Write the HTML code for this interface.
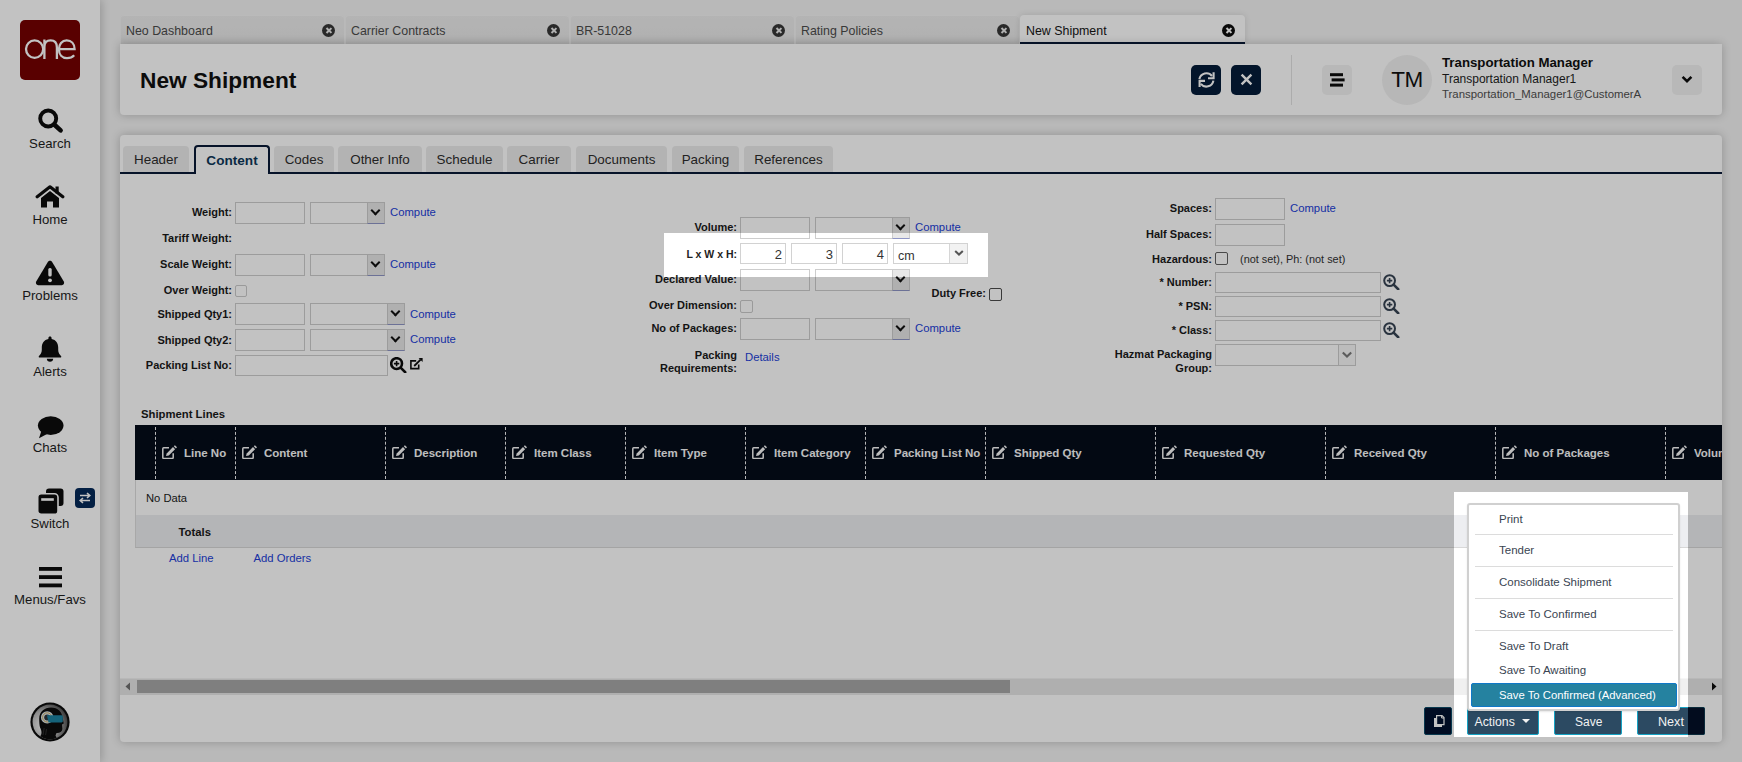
<!DOCTYPE html>
<html><head><meta charset="utf-8">
<style>
*{box-sizing:border-box;margin:0;padding:0}
html,body{width:1742px;height:762px;overflow:hidden}
body{background:#f3f3f3;font-family:"Liberation Sans",sans-serif;color:#161616;position:relative}
.a{position:absolute}
#side{left:0;top:0;width:100px;height:762px;background:#ffffff;box-shadow:2px 0 8px rgba(0,0,0,.18)}
.logo{left:20px;top:20px;width:60px;height:60px;background:#750000;border-radius:5px}
.nl{font-size:13.2px;color:#1d1d1d;width:100px;text-align:center;left:0}
.dt{top:15px;height:29px;width:224px;background:linear-gradient(#ededed,#e9e9e9 75%,#e1e1e1);border-radius:4px 4px 0 0;box-shadow:inset 0 1px 0 #f5f5f5,inset 1px 0 0 #f2f2f2}
.dt span{position:absolute;left:6px;top:9px;font-size:12.4px;color:#4c4c4c;white-space:nowrap}
.dt i{position:absolute;left:202px;top:8.6px;width:13px;height:13px;border-radius:50%;background:#373737}
.dt i:before,.dt i:after{content:"";position:absolute;left:6px;top:3px;width:1.8px;height:7px;background:#e9e9e9;transform:rotate(45deg)}
.dt i:after{transform:rotate(-45deg)}
.dt i.ai{background:#0d0d0d}.dt i.ai:before,.dt i.ai:after{background:#ffffff}
.panel{background:#ffffff;border-radius:4px;box-shadow:0 0 10px rgba(0,0,0,.22)}
.ct{top:146px;height:26px;background:#ececec;border-radius:4px 4px 0 0;font-size:13.4px;color:#2d2d2d;text-align:center;line-height:27px}
.lbl{font-size:11px;font-weight:700;color:#1a1a1a;text-align:right;white-space:nowrap}
.inp{height:22px;border:1px solid #cdcdcd;background:#ffffff}
.sel{height:22px;border:1px solid #cdcdcd;background:#ffffff}
.sel b{position:absolute;right:-1px;top:0;width:18px;height:21px;background:#e8e8e8;border-left:1px solid #cdcdcd;border-right:1px solid #cdcdcd;border-bottom:1px solid #8e95c5}
.sel b:after{content:"";position:absolute;left:4.3px;top:4.4px;width:4.9px;height:4.9px;border-right:2.1px solid #121212;border-bottom:2.1px solid #121212;transform:rotate(45deg)}
.sel.h b:after{display:none}
.lnk{font-size:11.3px;color:#2437c8;white-space:nowrap}
.cb{width:12px;height:12px;border:1px solid #cbcbcb;border-radius:2px;background:#ffffff}
</style></head><body>
<!-- sidebar -->
<div id="side" class="a">
  <div class="a logo"></div>
  <svg class="a" style="left:20px;top:20px" width="60" height="60" viewBox="0 0 60 60"><g fill="none" stroke="#ffffff" stroke-width="2.3"><ellipse cx="14.6" cy="29.1" rx="8.6" ry="8.7"/><path d="M24.4 39 V19.6 M24.4 27 C24.4 22 27.2 20.4 30.6 20.4 C34.6 20.4 36.9 22.6 36.9 27.5 V39"/><path d="M38.9 29.2 H54.6 C54.6 23.6 51.2 20.4 46.7 20.4 C42 20.4 38.9 24.3 38.9 29.3 C38.9 34.6 42.2 38.1 47 38.1 C50.4 38.1 52.6 36.9 54.2 35.2"/></g></svg>
  <svg class="a" style="left:38px;top:108px" width="26" height="26" viewBox="0 0 26 26"><circle cx="10.2" cy="10.5" r="8" fill="none" stroke="#0d0d0d" stroke-width="3.9"/><path d="M16.2 16.5 L22.6 22.4" stroke="#0d0d0d" stroke-width="4.6" stroke-linecap="round"/></svg>
  <div class="a nl" style="top:136px">Search</div>
  <svg class="a" style="left:35px;top:185px" width="30" height="23" viewBox="0 0 30 23"><path d="M2.2 11.8 L15 1.8 L27.8 11.8" fill="none" stroke="#0d0d0d" stroke-width="3.2" stroke-linecap="round" stroke-linejoin="round"/><rect x="20.5" y="1.5" width="3.2" height="7" fill="#0d0d0d"/><path d="M6 13 L15 6 L24 13 V22.6 H18 V16.5 H12 V22.6 H6 Z" fill="#0d0d0d"/></svg>
  <div class="a nl" style="top:212px">Home</div>
  <svg class="a" style="left:35px;top:260px" width="30" height="26" viewBox="0 0 30 26"><path d="M15 0.8 C16.1 0.8 16.8 1.4 17.3 2.2 L28.8 21.6 C29.7 23.2 28.6 25.2 26.8 25.2 H3.2 C1.4 25.2 0.3 23.2 1.2 21.6 L12.7 2.2 C13.2 1.4 13.9 0.8 15 0.8 Z" fill="#0d0d0d"/><rect x="13.3" y="8" width="3.4" height="8.5" rx="1.5" fill="#ffffff"/><circle cx="15" cy="20.3" r="1.9" fill="#ffffff"/></svg>
  <div class="a nl" style="top:288px">Problems</div>
  <svg class="a" style="left:38px;top:336px" width="24" height="26" viewBox="0 0 24 26"><path d="M12 0.5 C13 0.5 13.6 1.2 13.6 2.2 V3 C18 3.8 20.2 7.5 20.2 11.5 V14 C20.2 16.5 21.5 18.5 23 20 C23.6 20.6 23.3 21.6 22.4 21.6 H1.6 C0.7 21.6 0.4 20.6 1 20 C2.5 18.5 3.8 16.5 3.8 14 V11.5 C3.8 7.5 6 3.8 10.4 3 V2.2 C10.4 1.2 11 0.5 12 0.5 Z" fill="#0d0d0d"/><path d="M8.8 22.8 H15.2 C15.2 24.6 13.8 25.8 12 25.8 C10.2 25.8 8.8 24.6 8.8 22.8 Z" fill="#0d0d0d"/></svg>
  <div class="a nl" style="top:364px">Alerts</div>
  <svg class="a" style="left:37px;top:416px" width="27" height="23" viewBox="0 0 27 23"><ellipse cx="13.7" cy="9.6" rx="12.8" ry="9.3" fill="#0d0d0d"/><path d="M4.5 14.5 L2 22.3 L11 17.5 Z" fill="#0d0d0d"/></svg>
  <div class="a nl" style="top:440px">Chats</div>
  <svg class="a" style="left:38px;top:488px" width="26" height="26" viewBox="0 0 26 26"><rect x="8" y="0.5" width="17.5" height="17.5" rx="3" fill="#0d0d0d"/><rect x="-0.3" y="5.8" width="20.3" height="20.6" rx="3.5" fill="#0d0d0d" stroke="#ffffff" stroke-width="1.6"/><rect x="3.2" y="10.2" width="12.6" height="2.6" fill="#ffffff"/></svg>
  <div class="a" style="left:75px;top:488px;width:20px;height:20px;border-radius:4px;background:#042959"></div>
  <svg class="a" style="left:75px;top:488px" width="20" height="20" viewBox="0 0 20 20"><path d="M5 7.5 H14.5 M12 5 L14.8 7.5 L12 10 M15 12.5 H5.5 M8 10 L5.2 12.5 L8 15" stroke="#ffffff" stroke-width="1.6" fill="none"/></svg>
  <div class="a nl" style="top:516px">Switch</div>
  <svg class="a" style="left:39px;top:567px" width="23" height="21" viewBox="0 0 23 21"><rect x="0" y="0" width="23" height="3.8" fill="#0d0d0d"/><rect x="0" y="8.2" width="23" height="3.8" fill="#0d0d0d"/><rect x="0" y="16.5" width="23" height="3.8" fill="#0d0d0d"/></svg>
  <div class="a nl" style="top:592px">Menus/Favs</div>
  <svg class="a" style="left:30px;top:702px" width="40" height="40" viewBox="0 0 40 40"><defs><radialGradient id="ag" cx="0.32" cy="0.6" r="0.75"><stop offset="0" stop-color="#ffffff"/><stop offset="0.55" stop-color="#b8b8b8"/><stop offset="1" stop-color="#3d3d3d"/></radialGradient><clipPath id="ac"><circle cx="20" cy="20" r="17.4"/></clipPath></defs><circle cx="20" cy="20" r="19.6" fill="#0d0d0d"/><circle cx="20" cy="20" r="17.4" fill="url(#ag)"/><g clip-path="url(#ac)"><path d="M9.2 17 C9.2 9.5 14.5 5.6 21 5.6 C28 5.6 32.2 10 32.6 16 L33.8 21.5 L32 22.6 L32.4 27 C32.2 30 29.5 31.2 26.5 31 L25.5 33.5 L29 41 H7 L11.2 32.5 C12 29.5 11 27.5 10 25.5 C9.4 23 9.2 20 9.2 17 Z" fill="#0d0d0d"/><circle cx="17.2" cy="15.4" r="6.2" fill="#deeaef"/><circle cx="17.2" cy="15.4" r="4.6" fill="none" stroke="#cda14f" stroke-width="0.9"/><circle cx="17.2" cy="15.4" r="3" fill="#32373a"/><path d="M17 13.2 H31.6 C32.6 13.2 32.8 14 32.8 15 V19 C32.8 20 32.4 20.4 31.6 20.4 H18.5 Z" fill="#1c82a1"/><path d="M14.2 26 L13 33 M16.5 27 L15.6 33" stroke="#373737" stroke-width="0.8"/></g></svg>
</div>
<!-- doc tabs -->
<div class="a dt" style="left:120px"><span>Neo Dashboard</span><i></i></div>
<div class="a dt" style="left:345px"><span>Carrier Contracts</span><i></i></div>
<div class="a dt" style="left:570px"><span>BR-51028</span><i></i></div>
<div class="a dt" style="left:795px"><span>Rating Policies</span><i></i></div>
<div class="a dt" style="left:1020px;width:225px;background:#ffffff;border-bottom:2px solid #081a37;box-shadow:0 0 6px rgba(0,0,0,.12)"><span style="color:#161616">New Shipment</span><i class="ai"></i></div>
<!-- header panel -->
<div class="a panel" style="left:120px;top:44px;width:1602px;height:71px;border-radius:0 0 4px 4px"></div>
<div class="a" style="left:140px;top:67px;font-size:22.7px;font-weight:700;color:#101010">New Shipment</div>
<div class="a" style="left:1191px;top:65px;width:30px;height:30px;border-radius:5px;background:#041c39"></div>
<svg class="a" style="left:1191px;top:65px" width="30" height="30" viewBox="0 0 30 30"><g fill="none" stroke="#ffffff" stroke-width="2.1"><path d="M8.4 14.2 A7.1 7.1 0 0 1 21 11"/><path d="M22.6 7.2 V13.3 H17"/><path d="M22.4 15.6 A7.1 7.1 0 0 1 9.8 18.8"/><path d="M8.6 22 V15.9 H14"/></g></svg>
<div class="a" style="left:1231px;top:65px;width:30px;height:30px;border-radius:5px;background:#041c39"></div>
<svg class="a" style="left:1231px;top:65px" width="30" height="30" viewBox="0 0 30 30"><path d="M10.6 9.6 L20.4 19.4 M20.4 9.6 L10.6 19.4" stroke="#ffffff" stroke-width="2.4" stroke-linecap="butt"/></svg>
<div class="a" style="left:1291px;top:55px;width:1px;height:50px;background:#e2e2e2"></div>
<div class="a" style="left:1322px;top:65px;width:30px;height:30px;border-radius:5px;background:#f2f2f2"></div>
<svg class="a" style="left:1322px;top:65px" width="30" height="30"><rect x="8" y="8.2" width="13" height="3" fill="#0d0d0d"/><rect x="9.6" y="13.4" width="13" height="3" fill="#0d0d0d"/><rect x="8" y="18.6" width="13" height="3" fill="#0d0d0d"/></svg>
<div class="a" style="left:1382px;top:55px;width:50px;height:50px;border-radius:50%;background:#f1f1f1"></div>
<div class="a" style="left:1382px;top:67px;width:50px;text-align:center;font-size:22.5px;color:#101010;letter-spacing:-0.5px">TM</div>
<div class="a" style="left:1442px;top:54.5px;font-size:13.25px;font-weight:700;color:#101010;white-space:nowrap">Transportation Manager</div>
<div class="a" style="left:1442px;top:71.5px;font-size:12px;color:#1d1d1d;white-space:nowrap">Transportation Manager1</div>
<div class="a" style="left:1442px;top:88px;font-size:11.4px;color:#4f4f4f;white-space:nowrap">Transportation_Manager1@CustomerA</div>
<div class="a" style="left:1672px;top:65px;width:30px;height:30px;border-radius:5px;background:#f2f2f2"></div>
<svg class="a" style="left:1672px;top:65px" width="30" height="30"><path d="M10.6 11.9 L15 16.2 L19.4 11.9" fill="none" stroke="#0d0d0d" stroke-width="2.6"/></svg>
<!-- content panel -->
<div class="a panel" style="left:120px;top:135px;width:1602px;height:607px"></div>
<div class="a ct" style="left:123px;width:66px">Header</div>
<div class="a ct" style="left:194px;width:76px;top:145px;height:29px;background:#ffffff;border:2px solid #081a37;border-bottom:none;font-weight:700;color:#0e3759;line-height:27px;font-size:13.6px;z-index:2">Content</div>
<div class="a ct" style="left:274px;width:60px">Codes</div>
<div class="a ct" style="left:338px;width:84px">Other Info</div>
<div class="a ct" style="left:426px;width:77px">Schedule</div>
<div class="a ct" style="left:507px;width:64px">Carrier</div>
<div class="a ct" style="left:576px;width:91px">Documents</div>
<div class="a ct" style="left:672px;width:67px">Packing</div>
<div class="a ct" style="left:744px;width:89px">References</div>
<div class="a" style="left:120px;top:172px;width:1602px;height:2px;background:#081a37"></div>

<div class="a" style="right:1510.0px;top:206.0px;font-size:11px;font-weight:700;color:#1a1a1a;white-space:nowrap;line-height:normal;">Weight:</div>
<div class="a inp" style="left:235px;top:202px;width:70px;height:22px"></div>
<div class="a sel" style="left:310px;top:202px;width:75px;height:22px"><b></b></div>
<div class="a" style="left:390.0px;top:205.8px;font-size:11.3px;font-weight:400;color:#223ed8;white-space:nowrap;line-height:normal;">Compute</div>
<div class="a" style="right:1510.0px;top:232.0px;font-size:11px;font-weight:700;color:#1a1a1a;white-space:nowrap;line-height:normal;">Tariff Weight:</div>
<div class="a" style="right:1510.0px;top:258.0px;font-size:11px;font-weight:700;color:#1a1a1a;white-space:nowrap;line-height:normal;">Scale Weight:</div>
<div class="a inp" style="left:235px;top:254px;width:70px;height:22px"></div>
<div class="a sel" style="left:310px;top:254px;width:75px;height:22px"><b></b></div>
<div class="a" style="left:390.0px;top:257.8px;font-size:11.3px;font-weight:400;color:#223ed8;white-space:nowrap;line-height:normal;">Compute</div>
<div class="a" style="right:1510.0px;top:284.0px;font-size:11px;font-weight:700;color:#1a1a1a;white-space:nowrap;line-height:normal;">Over Weight:</div>
<div class="a cb" style="left:235px;top:285px;width:12px;height:12px"></div>
<div class="a" style="right:1510.0px;top:308.0px;font-size:11px;font-weight:700;color:#1a1a1a;white-space:nowrap;line-height:normal;">Shipped Qty1:</div>
<div class="a inp" style="left:235px;top:303px;width:70px;height:22px"></div>
<div class="a sel" style="left:310px;top:303px;width:95px;height:22px"><b></b></div>
<div class="a" style="left:410.0px;top:307.8px;font-size:11.3px;font-weight:400;color:#223ed8;white-space:nowrap;line-height:normal;">Compute</div>
<div class="a" style="right:1510.0px;top:333.5px;font-size:11px;font-weight:700;color:#1a1a1a;white-space:nowrap;line-height:normal;">Shipped Qty2:</div>
<div class="a inp" style="left:235px;top:329px;width:70px;height:22px"></div>
<div class="a sel" style="left:310px;top:329px;width:95px;height:22px"><b></b></div>
<div class="a" style="left:410.0px;top:333.3px;font-size:11.3px;font-weight:400;color:#223ed8;white-space:nowrap;line-height:normal;">Compute</div>
<div class="a" style="right:1510.0px;top:359.0px;font-size:11px;font-weight:700;color:#1a1a1a;white-space:nowrap;line-height:normal;">Packing List No:</div>
<div class="a inp" style="left:235px;top:355px;width:153px;height:21px"></div>
<svg class="a" style="left:390px;top:357px" width="17" height="16" viewBox="0 0 17 16"><circle cx="6.6" cy="6.6" r="5.4" fill="none" stroke="#0d0d0d" stroke-width="2.6"/><path d="M10.6 10.6 L15.2 15.2" stroke="#0d0d0d" stroke-width="2.6" stroke-linecap="round"/><path d="M6.6 3.9 V9.3 M3.9 6.6 H9.3" stroke="#0d0d0d" stroke-width="1.6"/></svg>
<svg class="a" style="left:409px;top:357px" width="15" height="14" viewBox="0 0 15 14"><path d="M7.2 3.9 H1.9 V11.6 H9.7 V7.6" fill="none" stroke="#0d0d0d" stroke-width="1.6"/><path d="M5.2 9 L11.6 2.6" stroke="#0d0d0d" stroke-width="1.8"/><path d="M9.6 1 H13.6 V5 Z" fill="#0d0d0d"/></svg>
<div class="a" style="right:1005.0px;top:221.0px;font-size:11px;font-weight:700;color:#1a1a1a;white-space:nowrap;line-height:normal;">Volume:</div>
<div class="a inp" style="left:740px;top:217px;width:70px;height:22px"></div>
<div class="a sel" style="left:815px;top:217px;width:95px;height:22px"><b></b></div>
<div class="a" style="left:915.0px;top:220.8px;font-size:11.3px;font-weight:400;color:#223ed8;white-space:nowrap;line-height:normal;">Compute</div>
<div class="a" style="right:1005.0px;top:272.5px;font-size:11px;font-weight:700;color:#1a1a1a;white-space:nowrap;line-height:normal;">Declared Value:</div>
<div class="a inp" style="left:740px;top:269px;width:70px;height:22px"></div>
<div class="a sel" style="left:815px;top:269px;width:95px;height:22px"><b></b></div>
<div class="a" style="right:756.0px;top:287.0px;font-size:11px;font-weight:700;color:#1a1a1a;white-space:nowrap;line-height:normal;">Duty Free:</div>
<div class="a cb" style="left:989px;top:288px;width:13px;height:13px;border-color:#4c4c4c"></div>
<div class="a" style="right:1005.0px;top:299.0px;font-size:11px;font-weight:700;color:#1a1a1a;white-space:nowrap;line-height:normal;">Over Dimension:</div>
<div class="a cb" style="left:740px;top:300px;width:13px;height:13px"></div>
<div class="a" style="right:1005.0px;top:321.5px;font-size:11px;font-weight:700;color:#1a1a1a;white-space:nowrap;line-height:normal;">No of Packages:</div>
<div class="a inp" style="left:740px;top:318px;width:70px;height:22px"></div>
<div class="a sel" style="left:815px;top:318px;width:95px;height:22px"><b></b></div>
<div class="a" style="left:915.0px;top:322.3px;font-size:11.3px;font-weight:400;color:#223ed8;white-space:nowrap;line-height:normal;">Compute</div>
<div class="a" style="right:1005.0px;top:348.5px;font-size:11px;font-weight:700;color:#1a1a1a;white-space:nowrap;line-height:normal;">Packing</div>
<div class="a" style="right:1005.0px;top:362.0px;font-size:11px;font-weight:700;color:#1a1a1a;white-space:nowrap;line-height:normal;">Requirements:</div>
<div class="a" style="left:745.0px;top:350.8px;font-size:11.3px;font-weight:400;color:#223ed8;white-space:nowrap;line-height:normal;">Details</div>
<div class="a" style="right:530.0px;top:202.0px;font-size:11px;font-weight:700;color:#1a1a1a;white-space:nowrap;line-height:normal;">Spaces:</div>
<div class="a inp" style="left:1215px;top:198px;width:70px;height:22px"></div>
<div class="a" style="left:1290.0px;top:201.8px;font-size:11.3px;font-weight:400;color:#223ed8;white-space:nowrap;line-height:normal;">Compute</div>
<div class="a" style="right:530.0px;top:228.0px;font-size:11px;font-weight:700;color:#1a1a1a;white-space:nowrap;line-height:normal;">Half Spaces:</div>
<div class="a inp" style="left:1215px;top:224px;width:70px;height:22px"></div>
<div class="a" style="right:530.0px;top:253.0px;font-size:11px;font-weight:700;color:#1a1a1a;white-space:nowrap;line-height:normal;">Hazardous:</div>
<div class="a cb" style="left:1215px;top:252px;width:13px;height:13px;border-color:#616161"></div>
<div class="a" style="left:1240.0px;top:253.1px;font-size:10.9px;font-weight:400;color:#323232;white-space:nowrap;line-height:normal;">(not set), Ph: (not set)</div>
<div class="a" style="right:530.0px;top:276.0px;font-size:11px;font-weight:700;color:#1a1a1a;white-space:nowrap;line-height:normal;">* Number:</div>
<div class="a inp" style="left:1215px;top:272px;width:166px;height:21px"></div>
<svg class="a" style="left:1383px;top:274px" width="17" height="16" viewBox="0 0 17 16"><circle cx="6.6" cy="6.6" r="5.4" fill="none" stroke="#374454" stroke-width="2"/><path d="M10.6 10.6 L15.2 15.2" stroke="#374454" stroke-width="2.6" stroke-linecap="round"/><path d="M6.6 3.9 V9.3 M3.9 6.6 H9.3" stroke="#374454" stroke-width="1.6"/></svg>
<div class="a" style="right:530.0px;top:300.0px;font-size:11px;font-weight:700;color:#1a1a1a;white-space:nowrap;line-height:normal;">* PSN:</div>
<div class="a inp" style="left:1215px;top:296px;width:166px;height:21px"></div>
<svg class="a" style="left:1383px;top:298px" width="17" height="16" viewBox="0 0 17 16"><circle cx="6.6" cy="6.6" r="5.4" fill="none" stroke="#374454" stroke-width="2"/><path d="M10.6 10.6 L15.2 15.2" stroke="#374454" stroke-width="2.6" stroke-linecap="round"/><path d="M6.6 3.9 V9.3 M3.9 6.6 H9.3" stroke="#374454" stroke-width="1.6"/></svg>
<div class="a" style="right:530.0px;top:324.0px;font-size:11px;font-weight:700;color:#1a1a1a;white-space:nowrap;line-height:normal;">* Class:</div>
<div class="a inp" style="left:1215px;top:320px;width:166px;height:21px"></div>
<svg class="a" style="left:1383px;top:322px" width="17" height="16" viewBox="0 0 17 16"><circle cx="6.6" cy="6.6" r="5.4" fill="none" stroke="#374454" stroke-width="2"/><path d="M10.6 10.6 L15.2 15.2" stroke="#374454" stroke-width="2.6" stroke-linecap="round"/><path d="M6.6 3.9 V9.3 M3.9 6.6 H9.3" stroke="#374454" stroke-width="1.6"/></svg>
<div class="a" style="right:530.0px;top:348.0px;font-size:11px;font-weight:700;color:#1a1a1a;white-space:nowrap;line-height:normal;">Hazmat Packaging</div>
<div class="a" style="right:530.0px;top:362.0px;font-size:11px;font-weight:700;color:#1a1a1a;white-space:nowrap;line-height:normal;">Group:</div>
<div class="a sel h" style="left:1215px;top:344px;width:141px;height:22px"><b style="background:#f7f7f7;border-bottom-color:#cdcdcd"></b></div>
<svg class="a" style="left:1338px;top:344px" width="18" height="22"><path d="M4.8 8.6 L9 12.6 L13.2 8.6" fill="none" stroke="#797979" stroke-width="2.1"/></svg>
<div class="a" style="left:141.0px;top:407.8px;font-size:11.3px;font-weight:700;color:#1a1a1a;white-space:nowrap;line-height:normal;">Shipment Lines</div>
<div class="a" style="left:135px;top:425px;width:1587px;height:55px;background:#040c1a"></div>
<div class="a" style="left:155px;top:427px;width:0px;height:52px;border-left:1px dashed #f2f2f2"></div>
<svg class="a" style="left:162px;top:445px" width="15" height="14" viewBox="0 0 15 14"><path d="M7 2.8 H1.7 C1.1 2.8 0.8 3.1 0.8 3.7 V12.5 C0.8 13.1 1.1 13.4 1.7 13.4 H10.3 C10.9 13.4 11.2 13.1 11.2 12.5 V8.2" fill="none" stroke="#f9f9f9" stroke-width="1.5"/><path d="M4 11.1 L4.7 8.4 L11 2.1 L13.1 4.2 L6.8 10.5 Z" fill="#f9f9f9"/><path d="M11.8 1.3 L12.9 0.2 L15 2.3 L13.9 3.4 Z" fill="#f9f9f9"/></svg>
<div class="a" style="left:184.0px;top:446.6px;font-size:11.5px;font-weight:700;color:#f9f9f9;white-space:nowrap;line-height:normal;">Line No</div>
<div class="a" style="left:235px;top:427px;width:0px;height:52px;border-left:1px dashed #f2f2f2"></div>
<svg class="a" style="left:242px;top:445px" width="15" height="14" viewBox="0 0 15 14"><path d="M7 2.8 H1.7 C1.1 2.8 0.8 3.1 0.8 3.7 V12.5 C0.8 13.1 1.1 13.4 1.7 13.4 H10.3 C10.9 13.4 11.2 13.1 11.2 12.5 V8.2" fill="none" stroke="#f9f9f9" stroke-width="1.5"/><path d="M4 11.1 L4.7 8.4 L11 2.1 L13.1 4.2 L6.8 10.5 Z" fill="#f9f9f9"/><path d="M11.8 1.3 L12.9 0.2 L15 2.3 L13.9 3.4 Z" fill="#f9f9f9"/></svg>
<div class="a" style="left:264.0px;top:446.6px;font-size:11.5px;font-weight:700;color:#f9f9f9;white-space:nowrap;line-height:normal;">Content</div>
<div class="a" style="left:385px;top:427px;width:0px;height:52px;border-left:1px dashed #f2f2f2"></div>
<svg class="a" style="left:392px;top:445px" width="15" height="14" viewBox="0 0 15 14"><path d="M7 2.8 H1.7 C1.1 2.8 0.8 3.1 0.8 3.7 V12.5 C0.8 13.1 1.1 13.4 1.7 13.4 H10.3 C10.9 13.4 11.2 13.1 11.2 12.5 V8.2" fill="none" stroke="#f9f9f9" stroke-width="1.5"/><path d="M4 11.1 L4.7 8.4 L11 2.1 L13.1 4.2 L6.8 10.5 Z" fill="#f9f9f9"/><path d="M11.8 1.3 L12.9 0.2 L15 2.3 L13.9 3.4 Z" fill="#f9f9f9"/></svg>
<div class="a" style="left:414.0px;top:446.6px;font-size:11.5px;font-weight:700;color:#f9f9f9;white-space:nowrap;line-height:normal;">Description</div>
<div class="a" style="left:505px;top:427px;width:0px;height:52px;border-left:1px dashed #f2f2f2"></div>
<svg class="a" style="left:512px;top:445px" width="15" height="14" viewBox="0 0 15 14"><path d="M7 2.8 H1.7 C1.1 2.8 0.8 3.1 0.8 3.7 V12.5 C0.8 13.1 1.1 13.4 1.7 13.4 H10.3 C10.9 13.4 11.2 13.1 11.2 12.5 V8.2" fill="none" stroke="#f9f9f9" stroke-width="1.5"/><path d="M4 11.1 L4.7 8.4 L11 2.1 L13.1 4.2 L6.8 10.5 Z" fill="#f9f9f9"/><path d="M11.8 1.3 L12.9 0.2 L15 2.3 L13.9 3.4 Z" fill="#f9f9f9"/></svg>
<div class="a" style="left:534.0px;top:446.6px;font-size:11.5px;font-weight:700;color:#f9f9f9;white-space:nowrap;line-height:normal;">Item Class</div>
<div class="a" style="left:625px;top:427px;width:0px;height:52px;border-left:1px dashed #f2f2f2"></div>
<svg class="a" style="left:632px;top:445px" width="15" height="14" viewBox="0 0 15 14"><path d="M7 2.8 H1.7 C1.1 2.8 0.8 3.1 0.8 3.7 V12.5 C0.8 13.1 1.1 13.4 1.7 13.4 H10.3 C10.9 13.4 11.2 13.1 11.2 12.5 V8.2" fill="none" stroke="#f9f9f9" stroke-width="1.5"/><path d="M4 11.1 L4.7 8.4 L11 2.1 L13.1 4.2 L6.8 10.5 Z" fill="#f9f9f9"/><path d="M11.8 1.3 L12.9 0.2 L15 2.3 L13.9 3.4 Z" fill="#f9f9f9"/></svg>
<div class="a" style="left:654.0px;top:446.6px;font-size:11.5px;font-weight:700;color:#f9f9f9;white-space:nowrap;line-height:normal;">Item Type</div>
<div class="a" style="left:745px;top:427px;width:0px;height:52px;border-left:1px dashed #f2f2f2"></div>
<svg class="a" style="left:752px;top:445px" width="15" height="14" viewBox="0 0 15 14"><path d="M7 2.8 H1.7 C1.1 2.8 0.8 3.1 0.8 3.7 V12.5 C0.8 13.1 1.1 13.4 1.7 13.4 H10.3 C10.9 13.4 11.2 13.1 11.2 12.5 V8.2" fill="none" stroke="#f9f9f9" stroke-width="1.5"/><path d="M4 11.1 L4.7 8.4 L11 2.1 L13.1 4.2 L6.8 10.5 Z" fill="#f9f9f9"/><path d="M11.8 1.3 L12.9 0.2 L15 2.3 L13.9 3.4 Z" fill="#f9f9f9"/></svg>
<div class="a" style="left:774.0px;top:446.6px;font-size:11.5px;font-weight:700;color:#f9f9f9;white-space:nowrap;line-height:normal;">Item Category</div>
<div class="a" style="left:865px;top:427px;width:0px;height:52px;border-left:1px dashed #f2f2f2"></div>
<svg class="a" style="left:872px;top:445px" width="15" height="14" viewBox="0 0 15 14"><path d="M7 2.8 H1.7 C1.1 2.8 0.8 3.1 0.8 3.7 V12.5 C0.8 13.1 1.1 13.4 1.7 13.4 H10.3 C10.9 13.4 11.2 13.1 11.2 12.5 V8.2" fill="none" stroke="#f9f9f9" stroke-width="1.5"/><path d="M4 11.1 L4.7 8.4 L11 2.1 L13.1 4.2 L6.8 10.5 Z" fill="#f9f9f9"/><path d="M11.8 1.3 L12.9 0.2 L15 2.3 L13.9 3.4 Z" fill="#f9f9f9"/></svg>
<div class="a" style="left:894.0px;top:446.6px;font-size:11.5px;font-weight:700;color:#f9f9f9;white-space:nowrap;line-height:normal;">Packing List No</div>
<div class="a" style="left:985px;top:427px;width:0px;height:52px;border-left:1px dashed #f2f2f2"></div>
<svg class="a" style="left:992px;top:445px" width="15" height="14" viewBox="0 0 15 14"><path d="M7 2.8 H1.7 C1.1 2.8 0.8 3.1 0.8 3.7 V12.5 C0.8 13.1 1.1 13.4 1.7 13.4 H10.3 C10.9 13.4 11.2 13.1 11.2 12.5 V8.2" fill="none" stroke="#f9f9f9" stroke-width="1.5"/><path d="M4 11.1 L4.7 8.4 L11 2.1 L13.1 4.2 L6.8 10.5 Z" fill="#f9f9f9"/><path d="M11.8 1.3 L12.9 0.2 L15 2.3 L13.9 3.4 Z" fill="#f9f9f9"/></svg>
<div class="a" style="left:1014.0px;top:446.6px;font-size:11.5px;font-weight:700;color:#f9f9f9;white-space:nowrap;line-height:normal;">Shipped Qty</div>
<div class="a" style="left:1155px;top:427px;width:0px;height:52px;border-left:1px dashed #f2f2f2"></div>
<svg class="a" style="left:1162px;top:445px" width="15" height="14" viewBox="0 0 15 14"><path d="M7 2.8 H1.7 C1.1 2.8 0.8 3.1 0.8 3.7 V12.5 C0.8 13.1 1.1 13.4 1.7 13.4 H10.3 C10.9 13.4 11.2 13.1 11.2 12.5 V8.2" fill="none" stroke="#f9f9f9" stroke-width="1.5"/><path d="M4 11.1 L4.7 8.4 L11 2.1 L13.1 4.2 L6.8 10.5 Z" fill="#f9f9f9"/><path d="M11.8 1.3 L12.9 0.2 L15 2.3 L13.9 3.4 Z" fill="#f9f9f9"/></svg>
<div class="a" style="left:1184.0px;top:446.6px;font-size:11.5px;font-weight:700;color:#f9f9f9;white-space:nowrap;line-height:normal;">Requested Qty</div>
<div class="a" style="left:1325px;top:427px;width:0px;height:52px;border-left:1px dashed #f2f2f2"></div>
<svg class="a" style="left:1332px;top:445px" width="15" height="14" viewBox="0 0 15 14"><path d="M7 2.8 H1.7 C1.1 2.8 0.8 3.1 0.8 3.7 V12.5 C0.8 13.1 1.1 13.4 1.7 13.4 H10.3 C10.9 13.4 11.2 13.1 11.2 12.5 V8.2" fill="none" stroke="#f9f9f9" stroke-width="1.5"/><path d="M4 11.1 L4.7 8.4 L11 2.1 L13.1 4.2 L6.8 10.5 Z" fill="#f9f9f9"/><path d="M11.8 1.3 L12.9 0.2 L15 2.3 L13.9 3.4 Z" fill="#f9f9f9"/></svg>
<div class="a" style="left:1354.0px;top:446.6px;font-size:11.5px;font-weight:700;color:#f9f9f9;white-space:nowrap;line-height:normal;">Received Qty</div>
<div class="a" style="left:1495px;top:427px;width:0px;height:52px;border-left:1px dashed #f2f2f2"></div>
<svg class="a" style="left:1502px;top:445px" width="15" height="14" viewBox="0 0 15 14"><path d="M7 2.8 H1.7 C1.1 2.8 0.8 3.1 0.8 3.7 V12.5 C0.8 13.1 1.1 13.4 1.7 13.4 H10.3 C10.9 13.4 11.2 13.1 11.2 12.5 V8.2" fill="none" stroke="#f9f9f9" stroke-width="1.5"/><path d="M4 11.1 L4.7 8.4 L11 2.1 L13.1 4.2 L6.8 10.5 Z" fill="#f9f9f9"/><path d="M11.8 1.3 L12.9 0.2 L15 2.3 L13.9 3.4 Z" fill="#f9f9f9"/></svg>
<div class="a" style="left:1524.0px;top:446.6px;font-size:11.5px;font-weight:700;color:#f9f9f9;white-space:nowrap;line-height:normal;">No of Packages</div>
<div class="a" style="left:1665px;top:427px;width:0px;height:52px;border-left:1px dashed #f2f2f2"></div>
<svg class="a" style="left:1672px;top:445px" width="15" height="14" viewBox="0 0 15 14"><path d="M7 2.8 H1.7 C1.1 2.8 0.8 3.1 0.8 3.7 V12.5 C0.8 13.1 1.1 13.4 1.7 13.4 H10.3 C10.9 13.4 11.2 13.1 11.2 12.5 V8.2" fill="none" stroke="#f9f9f9" stroke-width="1.5"/><path d="M4 11.1 L4.7 8.4 L11 2.1 L13.1 4.2 L6.8 10.5 Z" fill="#f9f9f9"/><path d="M11.8 1.3 L12.9 0.2 L15 2.3 L13.9 3.4 Z" fill="#f9f9f9"/></svg>
<div class="a" style="left:1694px;top:446.6px;width:28px;overflow:hidden;font-size:11.5px;font-weight:700;color:#f9f9f9;white-space:nowrap">Volume</div>
<div class="a" style="left:135px;top:480px;width:1587px;height:35px;background:#ffffff;border-left:1px solid #dddddd"></div>
<div class="a" style="left:146.0px;top:491.9px;font-size:11.2px;font-weight:400;color:#1a1a1a;white-space:nowrap;line-height:normal;">No Data</div>
<div class="a" style="left:135px;top:515px;width:1587px;height:33px;background:#edeef1;border-left:1px solid #dddddd;border-bottom:1px solid #d8d8d8"></div>
<div class="a" style="left:178.5px;top:525.8px;font-size:11.3px;font-weight:700;color:#1a1a1a;white-space:nowrap;line-height:normal;">Totals</div>
<div class="a" style="left:169.0px;top:551.8px;font-size:11.3px;font-weight:400;color:#223ed8;white-space:nowrap;line-height:normal;">Add Line</div>
<div class="a" style="left:253.5px;top:551.8px;font-size:11.3px;font-weight:400;color:#223ed8;white-space:nowrap;line-height:normal;">Add Orders</div>
<div class="a" style="left:120px;top:678px;width:1602px;height:17px;background:#e6e6e6;border-top:1px solid #f2f2f2"></div>
<div class="a" style="left:137px;top:680px;width:873px;height:13px;background:#a7a7a7"></div>
<svg class="a" style="left:123px;top:680px" width="10" height="13"><path d="M7 2.5 V10.5 L2.5 6.5 Z" fill="#707070"/></svg>
<svg class="a" style="left:1709px;top:680px" width="10" height="13"><path d="M3 2.5 V10.5 L7.5 6.5 Z" fill="#0d0d0d"/></svg>
<div class="a" style="left:1424px;top:707px;width:28px;height:28px;background:#01112f;border-radius:2px;border:1px solid #0d4c69"></div>
<svg class="a" style="left:1424px;top:707px" width="28" height="28"><rect x="10" y="11" width="8" height="9" fill="#ffffff"/><path d="M12.6 8.6 H18 L20 10.6 V17.6 H12.6 Z" fill="#01112f" stroke="#ffffff" stroke-width="1.2"/><path d="M17.6 8.6 V11 H20" fill="none" stroke="#ffffff" stroke-width="1"/></svg>
<svg class="a" style="left:0;top:0;z-index:50" width="1742" height="762"><path fill-rule="evenodd" fill="rgba(0,0,0,0.24)" d="M0 0H1742V762H0Z M664 233H988V277H664Z M1454 492H1688V737H1454Z"/></svg>
<div class="a" style="left:0;top:0;width:1742px;height:762px;z-index:60"><div class="a" style="right:1005.0px;top:247.5px;font-size:10.5px;font-weight:700;color:#222;white-space:nowrap;line-height:normal;">L x W x H:</div>
<div class="a" style="left:740px;top:243px;width:46px;height:21px;border:1px solid #d2d2d2;background:#fff;text-align:right;padding-right:3px;font-size:13px;line-height:22px;color:#333">2</div>
<div class="a" style="left:791px;top:243px;width:46px;height:21px;border:1px solid #d2d2d2;background:#fff;text-align:right;padding-right:3px;font-size:13px;line-height:22px;color:#333">3</div>
<div class="a" style="left:842px;top:243px;width:46px;height:21px;border:1px solid #d2d2d2;background:#fff;text-align:right;padding-right:3px;font-size:13px;line-height:22px;color:#333">4</div>
<div class="a" style="left:893px;top:243px;width:75px;height:21px;border:1px solid #d2d2d2;background:#fff;font-size:12.5px;line-height:24px;padding-left:4px;color:#333">cm<b style="position:absolute;right:0;top:0;width:18px;height:19px;background:#f2f2f2;border-left:1px solid #d6d6d6"></b></div>
<svg class="a" style="left:950px;top:243px" width="18" height="21"><path d="M5.2 8 L9 11.6 L12.8 8" fill="none" stroke="#555" stroke-width="2"/></svg>
<div class="a" style="left:1467px;top:707px;width:72px;height:28px;background:#2c4a62;border:1px solid #16a3c4;border-radius:2px"></div>
<div class="a" style="left:1554px;top:707px;width:68px;height:28px;background:#2c4a62;border:1px solid #16a3c4;border-radius:2px"></div>
<div class="a" style="left:1637px;top:707px;width:68px;height:28px;background:#2c4a62;border:1px solid #16a3c4;border-radius:2px"></div>
<div class="a" style="left:1688px;top:707px;width:17px;height:28px;background:#020c1e;border-radius:0 2px 2px 0;border:1px solid #0a2a3a;border-left:none"></div>
<div class="a" style="left:1474.5px;top:714.9px;font-size:12.3px;font-weight:400;color:#f2f2f2;white-space:nowrap;line-height:normal;">Actions</div>
<svg class="a" style="left:1520px;top:715px" width="12" height="12"><path d="M2 4 H10 L6 8 Z" fill="#f2f2f2"/></svg>
<div class="a" style="left:1575.0px;top:715.1px;font-size:12px;font-weight:400;color:#f2f2f2;white-space:nowrap;line-height:normal;">Save</div>
<div class="a" style="left:1658.0px;top:714.6px;font-size:12.6px;font-weight:400;color:#f2f2f2;white-space:nowrap;line-height:normal;">Next</div>
<div class="a" style="left:1454px;top:678px;width:234px;height:17px;background:rgba(255,255,255,.4)"></div>
<div class="a" style="left:1467px;top:503px;width:213px;height:208px;background:#fff;border:2px solid #d0d0d0;border-radius:3px;box-shadow:0 1px 2px rgba(0,0,0,.1)"></div>
<div class="a" style="left:1499.0px;top:512.8px;font-size:11.5px;font-weight:400;color:#3a4552;white-space:nowrap;line-height:normal;">Print</div>
<div class="a" style="left:1499.0px;top:544.3px;font-size:11.5px;font-weight:400;color:#3a4552;white-space:nowrap;line-height:normal;">Tender</div>
<div class="a" style="left:1499.0px;top:576.3px;font-size:11.5px;font-weight:400;color:#3a4552;white-space:nowrap;line-height:normal;">Consolidate Shipment</div>
<div class="a" style="left:1499.0px;top:608.3px;font-size:11.5px;font-weight:400;color:#3a4552;white-space:nowrap;line-height:normal;">Save To Confirmed</div>
<div class="a" style="left:1499.0px;top:640.3px;font-size:11.5px;font-weight:400;color:#3a4552;white-space:nowrap;line-height:normal;">Save To Draft</div>
<div class="a" style="left:1499.0px;top:664.3px;font-size:11.5px;font-weight:400;color:#3a4552;white-space:nowrap;line-height:normal;">Save To Awaiting</div>
<div class="a" style="left:1475px;top:534px;width:198px;height:1px;background:#dcdcdc"></div>
<div class="a" style="left:1475px;top:566px;width:198px;height:1px;background:#dcdcdc"></div>
<div class="a" style="left:1475px;top:598px;width:198px;height:1px;background:#dcdcdc"></div>
<div class="a" style="left:1475px;top:630px;width:198px;height:1px;background:#dcdcdc"></div>
<div class="a" style="left:1471px;top:683px;width:206px;height:24px;background:#2582a0;border-radius:2px;border:1px solid #0f78c8"></div>
<div class="a" style="left:1499.0px;top:688.8px;font-size:11.3px;font-weight:400;color:#ffffff;white-space:nowrap;line-height:normal;">Save To Confirmed (Advanced)</div></div>
</body></html>
